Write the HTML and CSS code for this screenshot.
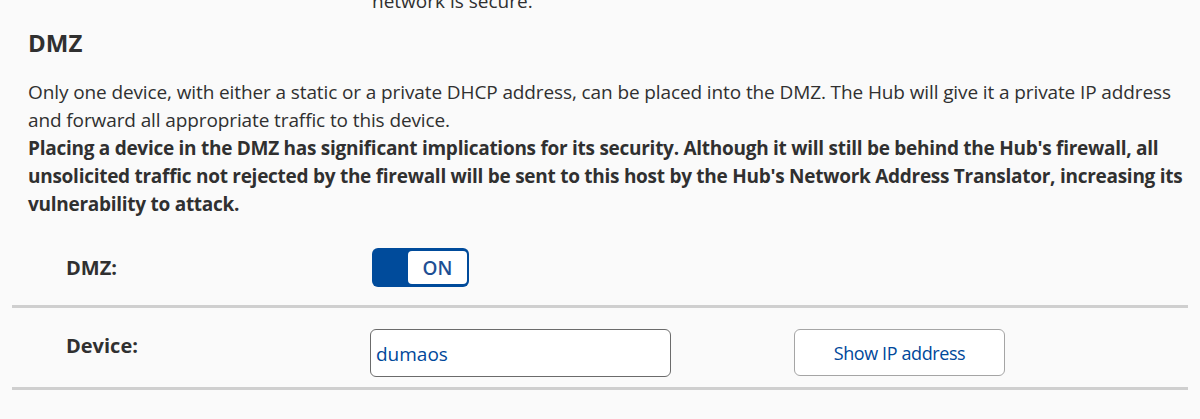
FILE: index.html
```html
<!DOCTYPE html>
<html lang="en">
<head>
<meta charset="utf-8">
<title>DMZ</title>
<link rel="stylesheet" href="styles.css">
</head>
<body>
<div class="page">
  <div class="prev-row"><span class="prev-text">network is secure.</span></div>
  <section class="dmz">
    <h2 class="dmz-title">DMZ</h2>
    <p class="dmz-desc">Only one device, with either a static or a private DHCP address, can be placed into the DMZ. The Hub will give it a private IP address and forward all appropriate traffic to this device.</p>
    <p class="dmz-warn">Placing a device in the DMZ has significant implications for its security. Although it will still be behind the Hub's firewall, all unsolicited traffic not rejected by the firewall will be sent to this host by the Hub's Network Address Translator, increasing its vulnerability to attack.</p>
  </section>
  <div class="form-row row-toggle">
    <span class="form-label">DMZ:</span>
    <div class="form-ctrl">
      <button class="toggle" type="button"><span class="toggle-knob">ON</span></button>
    </div>
  </div>
  <div class="form-row row-device">
    <span class="form-label label-top">Device:</span>
    <div class="form-ctrl ctrl-device">
      <div class="text-input">dumaos</div>
      <button class="btn" type="button">Show IP address</button>
    </div>
  </div>
</div>
</body>
</html>
```
FILE: styles.css
```css
* { box-sizing: border-box; }
html, body { margin: 0; background: #fafafa; }
body {
  font-family: "Open Sans", "Noto Sans", sans-serif;
  font-stretch: 90%;
  color: #303030;
  font-size: 19px;
}
.page { padding: 0 12px; }

.prev-row {
  height: 15px;
  display: flex;
  align-items: flex-end;
  overflow: hidden;
}
.prev-text {
  display: block;
  flex: none;
  padding-left: 360px;
  line-height: 28px;
  height: 28px;
}

.dmz { padding: 0 0 0 16px; }
.dmz-title {
  margin: 13px 0 0;
  font-size: 24px;
  font-weight: 700;
  font-stretch: 100%;
  line-height: 30px;
}
.dmz-desc {
  margin: 20px 0 0;
  line-height: 28px;
  letter-spacing: -0.11px;
}
.dmz-warn {
  margin: 0;
  font-weight: 700;
  letter-spacing: -0.27px;
  line-height: 28px;
}

.form-row {
  display: flex;
  border-bottom: 3px solid #cfcfcf;
}
.form-label {
  width: 360px;
  padding-left: 54px;
  font-weight: 700;
  font-stretch: 100%;
  font-size: 20px;
  flex: none;
}
.row-toggle {
  align-items: center;
  margin-top: 30px;
  padding-bottom: 18px;
}
.row-device {
  align-items: flex-start;
  padding: 21px 0 10px;
}
.label-top { padding-top: 3px; }

.toggle {
  display: flex;
  justify-content: flex-end;
  width: 97px;
  height: 39px;
  padding: 3px 2px 3px 0;
  border: none;
  border-radius: 6px;
  background: #004b9b;
  cursor: pointer;
}
.toggle-knob {
  display: flex;
  align-items: center;
  justify-content: center;
  width: 59px;
  height: 100%;
  background: #fff;
  border-radius: 4px;
  color: #1d4f94;
  font-family: "Open Sans", sans-serif;
  font-stretch: 95%;
  font-weight: 600;
  font-size: 19px;
}

.ctrl-device { display: flex; gap: 123px; margin-left: -2px; }
.text-input {
  width: 301px;
  height: 48px;
  padding: 10px 0 0 5px;
  border: 1.5px solid #6b6b6b;
  border-radius: 6px;
  background: #fff;
  color: #00489a;
  font-size: 19px;
  line-height: 28px;
}
.btn {
  width: 211px;
  height: 47px;
  border: 1.5px solid #a5a5a5;
  border-radius: 6px;
  background: #fff;
  color: #00489a;
  font-family: "Open Sans", sans-serif;
  font-stretch: 90%;
  font-size: 18px;
  letter-spacing: -0.4px;
  cursor: pointer;
}
```
